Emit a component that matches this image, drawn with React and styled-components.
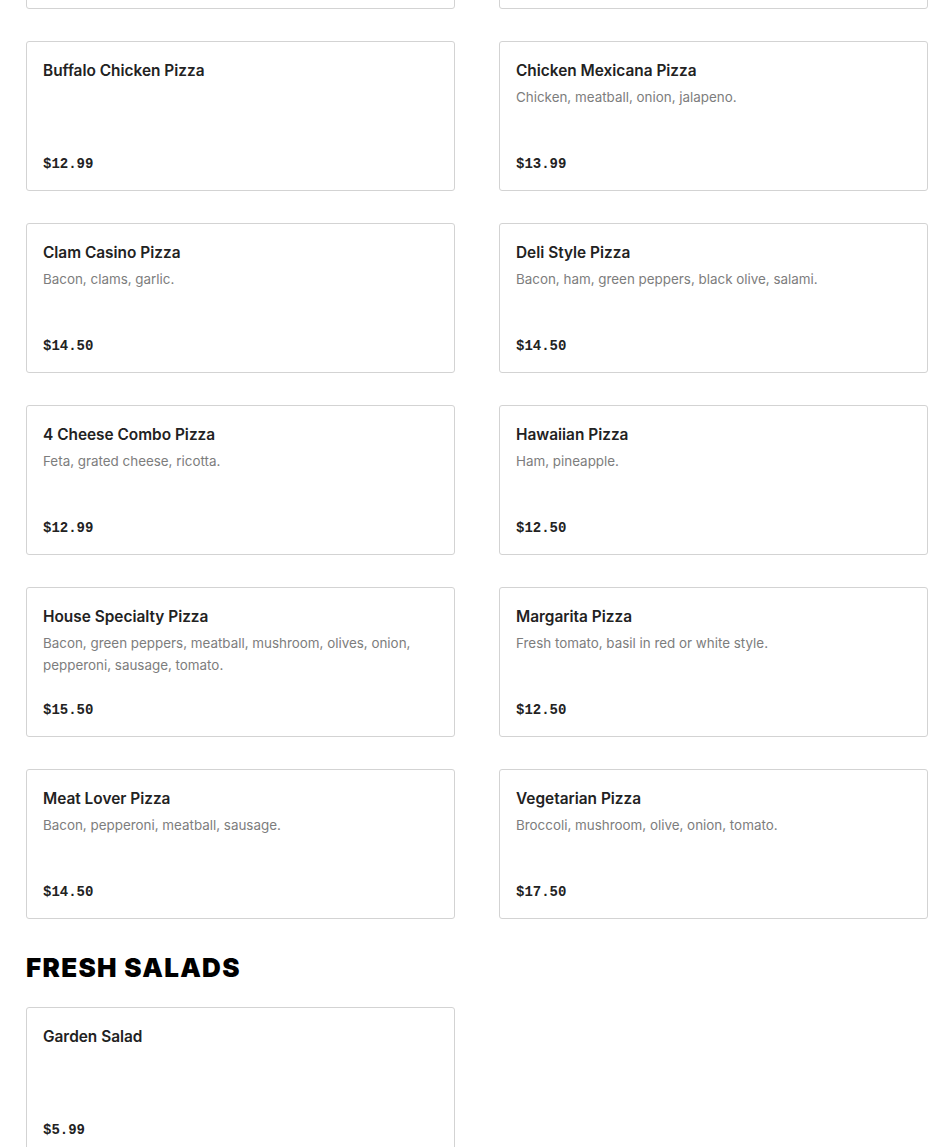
import React from "react";
import styled, { createGlobalStyle } from "styled-components";

const Global = createGlobalStyle`
  html, body { margin: 0; padding: 0; background: #fff; }
  body { font-family: Inter, "Noto Sans", sans-serif; -webkit-font-smoothing: antialiased; overflow: hidden; }
`;

const Page = styled.main`
  padding: 0 22px 40px 26px;
  margin-top: -141px;
`;

const Section = styled.section`
  display: flex;
  flex-direction: column;
`;

const Heading = styled.h2`
  margin: 33px 0 23px;
  font-family: Inter, "Liberation Sans", sans-serif;
  font-weight: 900;
  font-size: 26px;
  line-height: 32px;
  letter-spacing: 1.3px;
  color: #000;
  text-transform: uppercase;
`;

const Grid = styled.div`
  display: grid;
  grid-template-columns: 429px 429px;
  column-gap: 44px;
  row-gap: 32px;
`;

const Card = styled.article`
  box-sizing: border-box;
  height: 150px;
  border: 1px solid #d3d3d3;
  border-radius: 3px;
  padding: 16px;
  display: flex;
  flex-direction: column;
  background: #fff;
`;

const Title = styled.h3`
  margin: 0;
  font-size: 15.4px;
  line-height: 26px;
  font-weight: 600;
  color: #222;
`;

const Desc = styled.p`
  margin: 2px 0 0;
  font-size: 13.4px;
  line-height: 22px;
  color: #7d7d7d;
`;

const Price = styled.div`
  margin-top: auto;
  font-family: "Liberation Mono", "DejaVu Sans Mono", monospace;
  font-weight: 700;
  font-size: 14px;
  line-height: 20px;
  color: #222;
`;

const pizzas = [
  { name: "Buffalo Chicken Pizza", desc: "", price: "$12.99" },
  { name: "Chicken Mexicana Pizza", desc: "Chicken, meatball, onion, jalapeno.", price: "$13.99" },
  { name: "Clam Casino Pizza", desc: "Bacon, clams, garlic.", price: "$14.50" },
  { name: "Deli Style Pizza", desc: "Bacon, ham, green peppers, black olive, salami.", price: "$14.50" },
  { name: "4 Cheese Combo Pizza", desc: "Feta, grated cheese, ricotta.", price: "$12.99" },
  { name: "Hawaiian Pizza", desc: "Ham, pineapple.", price: "$12.50" },
  { name: "House Specialty Pizza", desc: "Bacon, green peppers, meatball, mushroom, olives, onion, pepperoni, sausage, tomato.", price: "$15.50" },
  { name: "Margarita Pizza", desc: "Fresh tomato, basil in red or white style.", price: "$12.50" },
  { name: "Meat Lover Pizza", desc: "Bacon, pepperoni, meatball, sausage.", price: "$14.50" },
  { name: "Vegetarian Pizza", desc: "Broccoli, mushroom, olive, onion, tomato.", price: "$17.50" },
];

const salads = [{ name: "Garden Salad", desc: "", price: "$5.99" }];

function Item({ item }) {
  return (
    <Card>
      <Title>{item.name}</Title>
      {item.desc && <Desc>{item.desc}</Desc>}
      <Price>{item.price}</Price>
    </Card>
  );
}

export default function App() {
  return (
    <>
      <Global />
      <Page>
        <Section>
          <Grid>
            <Card aria-hidden="true" />
            <Card aria-hidden="true" />
            {pizzas.map((p) => (
              <Item key={p.name} item={p} />
            ))}
          </Grid>
        </Section>
        <Section>
          <Heading>Fresh Salads</Heading>
          <Grid>
            {salads.map((s) => (
              <Item key={s.name} item={s} />
            ))}
          </Grid>
        </Section>
      </Page>
    </>
  );
}
